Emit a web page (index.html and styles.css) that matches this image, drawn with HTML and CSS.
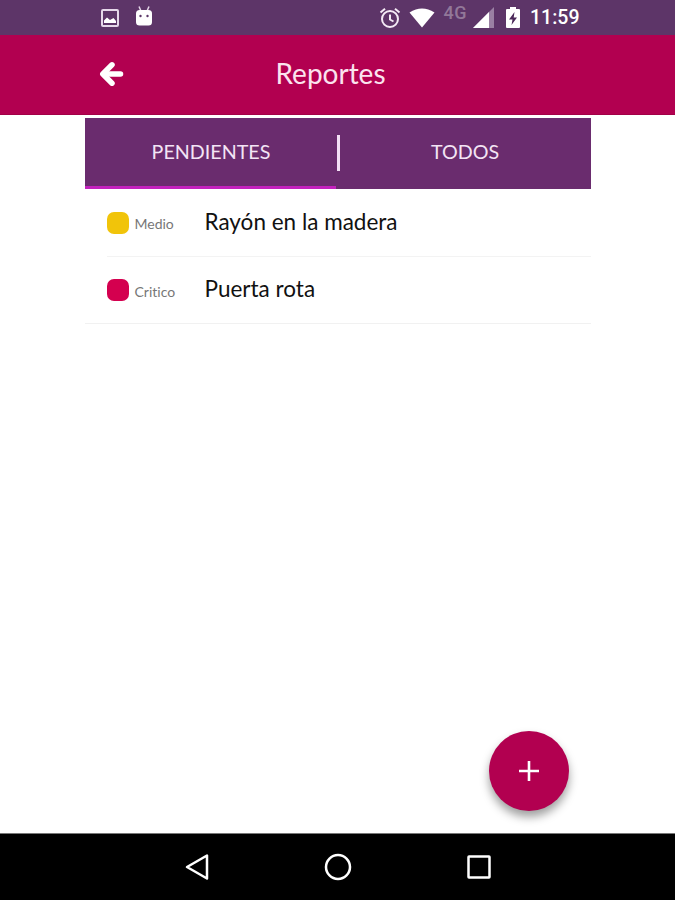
FILE: index.html
```
<!DOCTYPE html>
<html lang="es">
<head>
    <meta charset="UTF-8">
    <meta name="viewport" content="width=device-width, initial-scale=1.0">
    <title>Reportes</title>
    <link rel="stylesheet" href="styles.css">
</head>
<body>
    <div class="status-bar">
        <div class="status-left">
            <svg width="18" height="18" viewBox="0 0 18 18">
                <rect x="1" y="1" width="16" height="16" rx="1" fill="none" stroke="#e6d8ea" stroke-width="2"/>
                <path d="M3 14V11.500L6 8.500L9 11L12.500 9L15 12V14Z" fill="#fff"/>
            </svg>
            <svg width="18" height="20" viewBox="0 0 18 20">
                <path d="M4 0.500L6 5M14 0.500L12 5" stroke="#e6d8ea" stroke-width="1.500"/>
                <rect x="1" y="4" width="16" height="15.500" rx="3.500" fill="#fff"/>
                <circle cx="5.500" cy="10" r="1.200" fill="#5b3567"/>
                <circle cx="12.500" cy="10" r="1.200" fill="#5b3567"/>
            </svg>
        </div>
        <div class="status-right">
            <svg class="alarm" width="22" height="22" viewBox="0 0 22 22" fill="none" stroke="#f4eaf5" stroke-width="2">
                <circle cx="11" cy="12" r="8"/>
                <path d="M11 7.500V12.500L14.500 14.500M1.500 5.500L6 1.800M20.500 5.500L16 1.800"/>
            </svg>
            <svg class="wifi" width="26" height="20" viewBox="0 0 26 20">
                <path d="M0.500 4.500Q13 -3.500 25.500 4.500L13 19.500Z" fill="#fff"/>
            </svg>
            <span class="network">4G</span>
            <svg class="signal" width="21" height="21" viewBox="0 0 21 21">
                <path d="M0 21L21 0V21Z" fill="#9a80a3"/>
                <path d="M0 21L16 5V21Z" fill="#fff"/>
            </svg>
            <svg class="battery" width="14" height="21" viewBox="0 0 14 21">
                <path d="M4 0H10V2H13Q14 2 14 3V20Q14 21 13 21H1Q0 21 0 20V3Q0 2 1 2H4Z" fill="#fff"/>
                <path d="M8.500 5L3 12.500H6.500L5.500 18L11 10.500H7.700Z" fill="#4b2859"/>
            </svg>
            <span class="clock">11:59</span>
        </div>
    </div>

    <header class="header">
        <button class="back-btn" aria-label="Volver">
            <svg width="25" height="26" viewBox="0 0 25 26" fill="none" stroke="#fff" stroke-width="5.500" stroke-linecap="round" stroke-linejoin="round">
                <path d="M13 3.800L3.800 13L13 22.200"/>
                <path d="M5 13H21.500"/>
            </svg>
        </button>
        <h1 class="title">Reportes</h1>
    </header>

    <main class="content">
        <nav class="tabs">
            <a class="tab active">PENDIENTES</a>
            <a class="tab">TODOS</a>
            <span class="divider"></span>
        </nav>
        <ul class="report-list">
            <li class="report">
                <div class="report-row">
                    <span class="level level-medium"></span>
                    <span class="level-name">Medio</span>
                    <span class="report-name">Rayón en la madera</span>
                </div>
            </li>
            <li class="report">
                <div class="report-row">
                    <span class="level level-critical"></span>
                    <span class="level-name">Critico</span>
                    <span class="report-name">Puerta rota</span>
                </div>
            </li>
        </ul>
        <button class="add-btn" aria-label="Agregar">
            <svg width="20" height="20" viewBox="0 0 20 20" stroke="#fff" stroke-width="2.600">
                <path d="M10 0V20M0 10H20"/>
            </svg>
        </button>
    </main>

    <footer class="nav-bar">
        <svg width="28" height="28" viewBox="0 0 28 28">
            <path d="M4 14L24 2.500V25.500Z"/>
        </svg>
        <svg width="28" height="28" viewBox="0 0 28 28">
            <circle cx="14" cy="14" r="12"/>
        </svg>
        <svg width="28" height="28" viewBox="0 0 28 28">
            <rect x="3.500" y="3.500" width="21" height="21" rx="0.500"/>
        </svg>
    </footer>
</body>
</html>
```

FILE: styles.css
```
:root {
    --primary-color: #b20050;
    --status-color: #5d3568;
    --tab-color: #6a2c6e;
    --indicator-color: #c322bd;
}

* {
    margin: 0;
    padding: 0;
    box-sizing: border-box;
}

body {
    display: flex;
    flex-direction: column;
    height: 100vh;
    background-color: #fff;
    font-family: Lato, sans-serif;
    overflow: hidden;
}

svg {
    display: block;
    flex-shrink: 0;
}

button {
    border: none;
    background: none;
    cursor: pointer;
}

.status-bar {
    display: flex;
    justify-content: space-between;
    height: 35px;
    padding: 0 96px 0 101px;
    background-color: var(--status-color);
}

.status-left,
.status-right {
    display: flex;
    align-items: center;
}

.status-left {
    gap: 16px;
}

.status-left svg:last-child {
    margin-bottom: 3px;
}

.wifi {
    margin-left: 8px;
}

.network {
    margin: 0 6px 9px 9px;
    color: #927899;
    font: 500 18px/20px Roboto, sans-serif;
    letter-spacing: 0.5px;
}

.battery {
    margin: 0 10px 0 12px;
}

.clock {
    width: 49px;
    color: #fff;
    font: 500 19.5px/24px Roboto, sans-serif;
    white-space: nowrap;
}

.header {
    display: grid;
    grid-template-columns: 1fr auto 1fr;
    align-items: center;
    height: 80px;
    padding: 0 113px 1px 99px;
    background-color: var(--primary-color);
    border-bottom: 1px solid #a20047;
}

.back-btn {
    justify-self: start;
}

.title {
    padding-bottom: 3px;
    color: #fbe3ee;
    font-size: 28px;
    font-weight: 400;
}

.content {
    display: flex;
    flex-direction: column;
    flex-grow: 1;
    width: 506px;
    margin: 0 auto;
    padding: 3px 0 22px;
}

.tabs {
    position: relative;
    display: flex;
    height: 71px;
    background-color: var(--tab-color);
}

.tab {
    flex: 1;
    padding-left: 4px;
    border-bottom: 3px solid transparent;
    color: #f3e4f5;
    font-size: 19.7px;
    line-height: 67px;
    text-align: center;
}

.tab.active {
    flex: 0 0 251px;
    padding-left: 2px;
    border-color: var(--indicator-color);
}

.divider {
    position: absolute;
    top: 17px;
    left: 252px;
    width: 3px;
    height: 36px;
    background-color: #f3dff5;
}

.report-list {
    list-style: none;
    border-bottom: 1px solid #f1f1f1;
}

.report {
    padding-left: 22px;
}

.report-row {
    display: flex;
    align-items: center;
    height: 67px;
}

.report + .report .report-row {
    border-top: 1px solid #f3f3f3;
}

.level {
    width: 22px;
    height: 22px;
    margin-right: 6px;
    border-radius: 7px;
}

.level-medium {
    background-color: #f1c40a;
}

.level-critical {
    background-color: #d4004f;
}

.level-name {
    width: 70px;
    padding-top: 2px;
    color: #777;
    font-size: 14px;
    font-variant-ligatures: none;
}

.report-name {
    padding-bottom: 3px;
    color: #111;
    font-size: 22.5px;
}

.add-btn {
    display: flex;
    align-items: center;
    justify-content: center;
    align-self: flex-end;
    width: 80px;
    height: 80px;
    margin: auto 22px 0 0;
    border-radius: 50%;
    background-color: var(--primary-color);
    box-shadow: 0 6px 10px rgba(0, 0, 0, 0.38);
}

.nav-bar {
    display: flex;
    align-items: center;
    justify-content: center;
    gap: 113px;
    height: 67px;
    border-top: 1px solid #777;
    background-color: #000;
}

.nav-bar svg {
    fill: none;
    stroke: #fff;
    stroke-width: 2.5;
    stroke-linejoin: round;
}
```
